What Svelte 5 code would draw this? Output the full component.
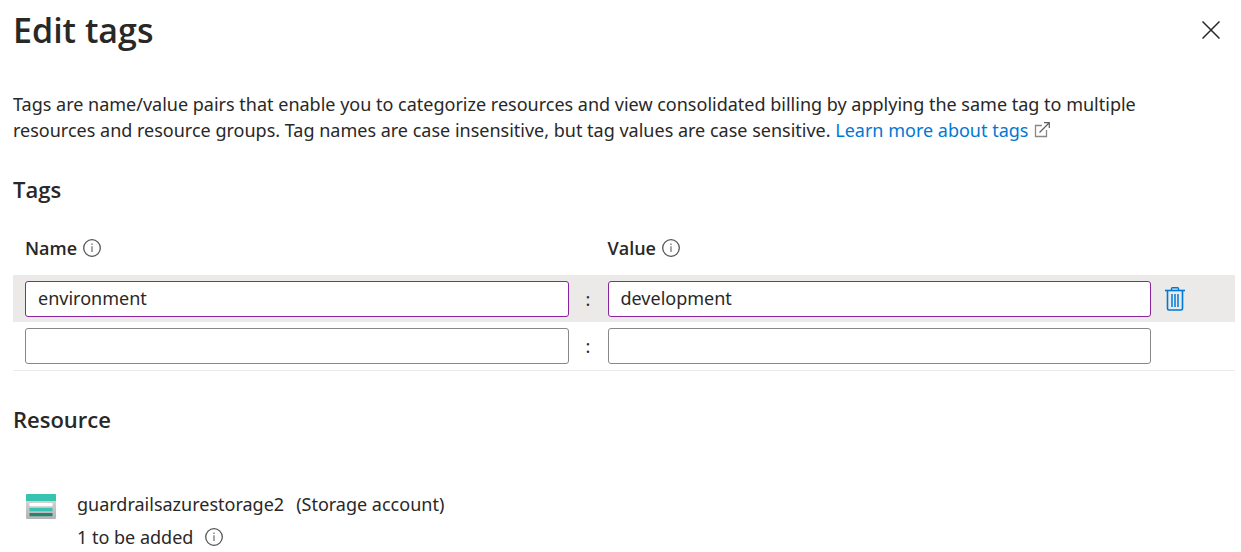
<script>
  let tags = $state([
    { name: 'environment', value: 'development' },
    { name: '', value: '' }
  ]);

  const isFilled = (tag) => tag.name !== '' || tag.value !== '';

  function removeTag(index) {
    tags.splice(index, 1);
  }
</script>

{#snippet info(label)}
  <button type="button" aria-label={label}>
    <svg viewBox="0 0 18 18" width="18" height="18" aria-hidden="true">
      <circle cx="9" cy="9" r="8.3" fill="none" stroke="#555" stroke-width="1.3" />
      <path d="M9 7.2V13" stroke="#777" stroke-width="1.3" />
      <path d="M9 4.6V6" stroke="#777" stroke-width="1.3" />
    </svg>
  </button>
{/snippet}

<main>
  <header>
    <h1>Edit tags</h1>
    <button type="button" aria-label="Close">
      <svg viewBox="0 0 18 18" width="18" height="18" aria-hidden="true">
        <path d="M.5 .5L17.5 17.5M17.5 .5L.5 17.5" stroke="#292827" stroke-width="1.5" />
      </svg>
    </button>
  </header>

  <p class="intro">
    Tags are name/value pairs that enable you to categorize resources and view consolidated billing by applying the same tag to multiple<br />
    resources and resource groups. Tag names are case insensitive, but tag values are case sensitive.
    <a href="#learn-more">Learn more about tags<svg viewBox="0 0 16 16" width="16" height="16" aria-hidden="true">
        <path d="M8 3.5H1.5V14.5H12.5V8" fill="none" stroke="#8a8886" stroke-width="1.3" />
        <path d="M5.5 10.5L15 1M10 .7H15.3V6" fill="none" stroke="#605e5c" stroke-width="1.2" />
      </svg></a>
  </p>

  <section>
    <h2>Tags</h2>
    <table>
      <thead>
        <tr>
          <th scope="col"><span>Name</span>{@render info('About tag names')}</th>
          <td></td>
          <th scope="col"><span>Value</span>{@render info('About tag values')}</th>
          <td></td>
        </tr>
      </thead>
      <tbody>
        {#each tags as tag, i}
          <tr class:filled={isFilled(tag)}>
            <td><input type="text" aria-label="Tag name" bind:value={tag.name} /></td>
            <td class="colon">:</td>
            <td><input type="text" aria-label="Tag value" bind:value={tag.value} /></td>
            <td class="action">
              {#if isFilled(tag)}
                <button type="button" aria-label="Delete tag" onclick={() => removeTag(i)}>
                  <svg viewBox="0 0 20 24" width="20" height="24" fill="none" stroke="#0078d4" aria-hidden="true">
                    <path d="M0 3.5H20" stroke-width="1.6" />
                    <path d="M6.5 3V1.7Q6.5 .8 7.4 .8H12.6Q13.5 .8 13.5 1.7V3" stroke-width="1.4" />
                    <path d="M2.5 4V21.5Q2.5 23 4 23H16Q17.5 23 17.5 21.5V4" stroke-width="1.6" />
                    <path d="M7 7V20M10 7V20M13 7V20" stroke="#3a96dd" stroke-width="2" />
                  </svg>
                </button>
              {/if}
            </td>
          </tr>
        {/each}
      </tbody>
    </table>
  </section>

  <section>
    <h2>Resource</h2>
    <div class="resource">
      <svg viewBox="0 0 30 25" width="30" height="25" aria-hidden="true">
        <defs>
          <linearGradient id="storage-body" x1="0" y1="1" x2="0" y2="0">
            <stop offset="0" stop-color="#b3b3b3" />
            <stop offset="1" stop-color="#dedede" />
          </linearGradient>
        </defs>
        <rect width="30" height="25" rx="1" fill="url(#storage-body)" />
        <path d="M0 7V1Q0 0 1 0H29Q30 0 30 1V7Z" fill="#37c2b1" />
        <rect x="3.5" y="9" width="23" height="3.2" rx=".6" fill="#fff" />
        <rect x="3.5" y="14" width="23" height="3.2" rx=".6" fill="#37c2b1" />
        <rect x="3.5" y="19" width="23" height="3.2" rx=".6" fill="#258277" />
      </svg>
      <div>
        <div class="line"><span>guardrailsazurestorage2</span><span>(Storage account)</span></div>
        <div class="line"><span>1 to be added</span>{@render info('About pending changes')}</div>
      </div>
    </div>
  </section>
</main>

<style>
  :global(body) {
    margin: 0;
    background: #fff;
  }

  main {
    padding: 8px 6px 0 13px;
    color: #292827;
    font-family: 'Segoe UI', 'Noto Sans', 'Open Sans', sans-serif;
    font-size: 18px;
    line-height: 26px;
  }

  header {
    display: flex;
    align-items: center;
    justify-content: space-between;
    padding-right: 15px;
  }

  h1,
  h2,
  p {
    margin: 0;
  }

  h1,
  h2,
  th {
    font-family: 'Segoe UI', 'Open Sans', sans-serif;
    font-weight: 600;
  }

  h1 {
    font-size: 34px;
    line-height: 44px;
  }

  h2 {
    font-size: 22px;
    line-height: 30px;
  }

  button {
    display: inline-flex;
    padding: 0;
    border: 0;
    background: none;
    cursor: pointer;
  }

  .intro {
    margin: 39px 0 31px;
  }

  a {
    color: #0078d4;
    text-decoration: none;
    white-space: nowrap;
  }

  a svg {
    margin-left: 6px;
    vertical-align: -1px;
  }

  table,
  thead,
  tbody {
    display: block;
  }

  table {
    margin: 31px 0 33px;
    border-bottom: 1px solid #edebe9;
  }

  tr {
    display: grid;
    grid-template-columns: 1fr 39px 1fr 84px;
    align-items: center;
    padding: 6px 0 5px 12px;
  }

  tbody tr:last-child {
    padding-bottom: 6px;
  }

  thead tr {
    padding: 0 0 14px 12px;
  }

  th,
  td {
    padding: 0;
  }

  th {
    display: flex;
    align-items: center;
    gap: 6px;
  }

  .filled {
    background: #ebeae9;
  }

  input {
    display: block;
    box-sizing: border-box;
    width: 100%;
    height: 36px;
    padding: 0 12px 2px;
    border: 1px solid #8a8886;
    border-radius: 3px;
    background: #fff;
    color: inherit;
    font: inherit;
  }

  .filled input {
    border-color: #8a24a0;
  }

  .colon {
    text-align: center;
  }

  .action {
    display: flex;
    padding-left: 14px;
  }

  .resource {
    display: flex;
    gap: 21px;
    padding: 57px 0 0 13px;
  }

  .resource > svg {
    margin-top: 3px;
  }

  .line {
    display: flex;
    align-items: center;
    gap: 12px;
    margin-bottom: 7px;
  }
</style>
